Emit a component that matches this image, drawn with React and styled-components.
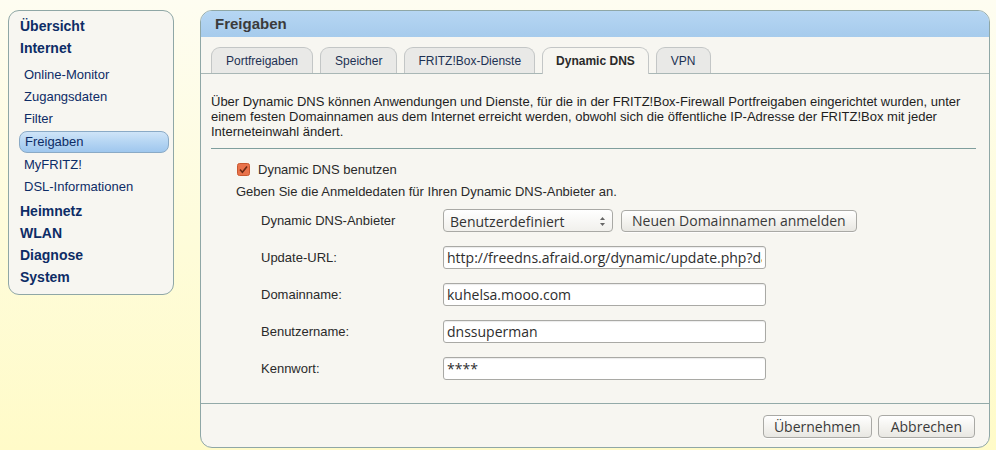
import React from 'react';
import styled, { createGlobalStyle } from 'styled-components';

const GlobalStyle = createGlobalStyle`
  html, body {
    margin: 0;
    padding: 0;
  }
  body {
    width: 996px;
    height: 450px;
    overflow: hidden;
    background: linear-gradient(to bottom, #fefdf1 0%, #fefcd9 55%, #fffbc8 100%);
    font-family: "Liberation Sans", Arial, sans-serif;
  }
`;

const Page = styled.div`
  display: flex;
  align-items: flex-start;
  gap: 26px;
  padding: 10px 0 0 8px;
`;

const Sidebar = styled.nav`
  width: 164px;
  padding: 4px 0 6px;
  background: #f7f6f1;
  border: 1px solid #8fa7a6;
  border-radius: 11px;
`;

const MainItem = styled.div`
  height: 22px;
  line-height: 22px;
  padding-left: 11px;
  margin-top: ${(p) => (p.$gap ? '2px' : '0')};
  font-size: 14px;
  font-weight: bold;
  color: #0d2c66;
`;

const SubList = styled.div`
  margin: 5px 0 0;
`;

const SubItem = styled.div`
  height: ${(p) => (p.$active ? '20px' : '22px')};
  line-height: ${(p) => (p.$active ? '20px' : '22px')};
  font-size: 13px;
  color: #0d2c66;
  padding-left: ${(p) => (p.$active ? '5px' : '15px')};
  margin: ${(p) => (p.$active ? '1px 4px 1px 10px' : '0')};
  border: ${(p) => (p.$active ? '1px solid #8aaac6' : 'none')};
  border-radius: 8px;
  background: ${(p) =>
    p.$active ? 'linear-gradient(to bottom, #cfe4f8 0%, #b5d5f3 50%, #9fc7ee 100%)' : 'transparent'};
`;

const Panel = styled.section`
  width: 788px;
  height: 436px;
  display: flex;
  flex-direction: column;
  background: #f7f6f1;
  border: 1px solid #8fa7a6;
  border-radius: 12px;
  overflow: hidden;
`;

const PanelHeader = styled.div`
  height: 26px;
  line-height: 26px;
  padding-left: 14px;
  font-size: 15px;
  font-weight: bold;
  color: #3b3b3b;
  background: linear-gradient(to bottom, #b6d6f3 0%, #a6cbec 100%);
`;

const TabBar = styled.div`
  display: flex;
  gap: 7px;
  padding: 10px 10px 0;
  border-bottom: 1px solid #a9b7b6;
`;

const Tab = styled.div`
  line-height: 26px;
  padding: 0 ${(p) => p.$pad || 14}px;
  font-size: 12px;
  font-weight: ${(p) => (p.$active ? 'bold' : 'normal')};
  color: ${(p) => (p.$active ? '#2a2a2a' : '#1d3153')};
  background: ${(p) => (p.$active ? '#f7f6f1' : '#e9e9e7')};
  border: 1px solid #c3c6c6;
  border-bottom: none;
  border-radius: 9px 9px 0 0;
  margin-bottom: ${(p) => (p.$active ? '-1px' : '0')};
  height: ${(p) => (p.$active ? '26px' : '25px')};
`;

const Content = styled.div`
  flex: 1;
  padding: 20px 13px 0 10px;
`;

const Intro = styled.p`
  margin: 0;
  font-size: 13px;
  line-height: 15px;
  color: #1e1e1e;
`;

const Rule = styled.hr`
  margin: 9px 0 0;
  border: none;
  border-top: 1px solid #7f9e9d;
`;

const CheckRow = styled.label`
  display: flex;
  align-items: center;
  gap: 8px;
  height: 18px;
  margin: 11px 0 0 26px;
  font-size: 13px;
  color: #2a2a2a;
`;

const Hint = styled.div`
  margin: 6px 0 0 25px;
  font-size: 13px;
  line-height: 15px;
  color: #2a2a2a;
`;

const Form = styled.div`
  display: grid;
  grid-template-columns: 182px auto;
  grid-auto-rows: 37px;
  align-items: center;
  margin: 3px 0 0 50px;
`;

const Label = styled.div`
  font-size: 13px;
  color: #2a2a2a;
`;

const ControlRow = styled.div`
  display: flex;
  align-items: center;
  gap: 8px;
`;

const SelectBox = styled.div`
  position: relative;
  width: 170px;
  height: 23px;
  line-height: 23px;
  box-sizing: border-box;
  padding-left: 6px;
  font-family: "Open Sans", "DejaVu Sans", sans-serif;
  font-size: 14px;
  color: #333;
  border: 1px solid #a9a9a5;
  border-radius: 4px;
  background: linear-gradient(to bottom, #ffffff 0%, #f1f0ec 100%);
`;

const SelectArrows = styled.svg`
  position: absolute;
  right: 6px;
  top: 6px;
`;

const Button = styled.button`
  height: ${(p) => p.$h || 23}px;
  padding: 0 ${(p) => p.$pad || 10}px;
  font-family: "Open Sans", "DejaVu Sans", sans-serif;
  font-size: 14px;
  color: #3a3a3a;
  border: 1px solid #a9a9a5;
  border-radius: 4px;
  background: linear-gradient(to bottom, #ffffff 0%, #f2f1ed 60%, #e8e7e2 100%);
  box-shadow: 0 1px 0 rgba(255, 255, 255, 0.8);
`;

const Input = styled.input`
  width: 323px;
  height: 23px;
  box-sizing: border-box;
  padding: 0 3px;
  font-family: "Open Sans", "DejaVu Sans", sans-serif;
  font-size: 14px;
  color: #2e2e2e;
  background: #ffffff;
  border: 1px solid #a9a9a5;
  border-radius: 3px;
  box-shadow: inset 0 1px 1px rgba(0, 0, 0, 0.08);
  outline: none;
`;

const Footer = styled.div`
  display: flex;
  justify-content: flex-end;
  gap: 6px;
  padding: 11px 14px 9px;
  border-top: 1px solid #93aaa9;
`;

const CheckIcon = () => (
  <svg width="13" height="13" viewBox="0 0 13 13">
    <rect x="0.5" y="0.5" width="12" height="12" rx="2" fill="#e9724a" stroke="#c9582f" />
    <path d="M3 6.5 L5.4 9.2 L10 3.5" fill="none" stroke="#6b2a14" strokeWidth="1.6" />
  </svg>
);

const fields = [
  { label: 'Update-URL:', value: 'http://freedns.afraid.org/dynamic/update.php?data=' },
  { label: 'Domainname:', value: 'kuhelsa.mooo.com' },
  { label: 'Benutzername:', value: 'dnssuperman' },
  { label: 'Kennwort:', value: '****' },
];

const App = () => (
  <>
    <GlobalStyle />
    <Page>
      <Sidebar>
        <MainItem>Übersicht</MainItem>
        <MainItem>Internet</MainItem>
        <SubList>
          <SubItem>Online-Monitor</SubItem>
          <SubItem>Zugangsdaten</SubItem>
          <SubItem>Filter</SubItem>
          <SubItem $active>Freigaben</SubItem>
          <SubItem>MyFRITZ!</SubItem>
          <SubItem>DSL-Informationen</SubItem>
        </SubList>
        <MainItem $gap>Heimnetz</MainItem>
        <MainItem>WLAN</MainItem>
        <MainItem>Diagnose</MainItem>
        <MainItem>System</MainItem>
      </Sidebar>

      <Panel>
        <PanelHeader>Freigaben</PanelHeader>
        <TabBar>
          <Tab>Portfreigaben</Tab>
          <Tab>Speicher</Tab>
          <Tab $pad={13}>FRITZ!Box-Dienste</Tab>
          <Tab $active $pad={13}>Dynamic DNS</Tab>
          <Tab $pad={14}>VPN</Tab>
        </TabBar>
        <Content>
          <Intro>
            Über Dynamic DNS können Anwendungen und Dienste, für die in der FRITZ!Box-Firewall
            Portfreigaben eingerichtet wurden, unter einem festen Domainnamen aus dem Internet
            erreicht werden, obwohl sich die öffentliche IP-Adresse der FRITZ!Box mit jeder
            Interneteinwahl ändert.
          </Intro>
          <Rule />
          <CheckRow>
            <CheckIcon />
            Dynamic DNS benutzen
          </CheckRow>
          <Hint>Geben Sie die Anmeldedaten für Ihren Dynamic DNS-Anbieter an.</Hint>
          <Form>
            <Label>Dynamic DNS-Anbieter</Label>
            <ControlRow>
              <SelectBox>
                Benutzerdefiniert
                <SelectArrows width="7" height="11" viewBox="0 0 7 11">
                  <path d="M3.5 1 L6 4 L1 4 Z" fill="#666" />
                  <path d="M3.5 10 L6 7 L1 7 Z" fill="#666" />
                </SelectArrows>
              </SelectBox>
              <Button $h={22}>Neuen Domainnamen anmelden</Button>
            </ControlRow>
            {fields.map((f) => (
              <React.Fragment key={f.label}>
                <Label>{f.label}</Label>
                <Input readOnly value={f.value} />
              </React.Fragment>
            ))}
          </Form>
        </Content>
        <Footer>
          <Button $pad={10}>Übernehmen</Button>
          <Button $pad={12}>Abbrechen</Button>
        </Footer>
      </Panel>
    </Page>
  </>
);

export default App;
